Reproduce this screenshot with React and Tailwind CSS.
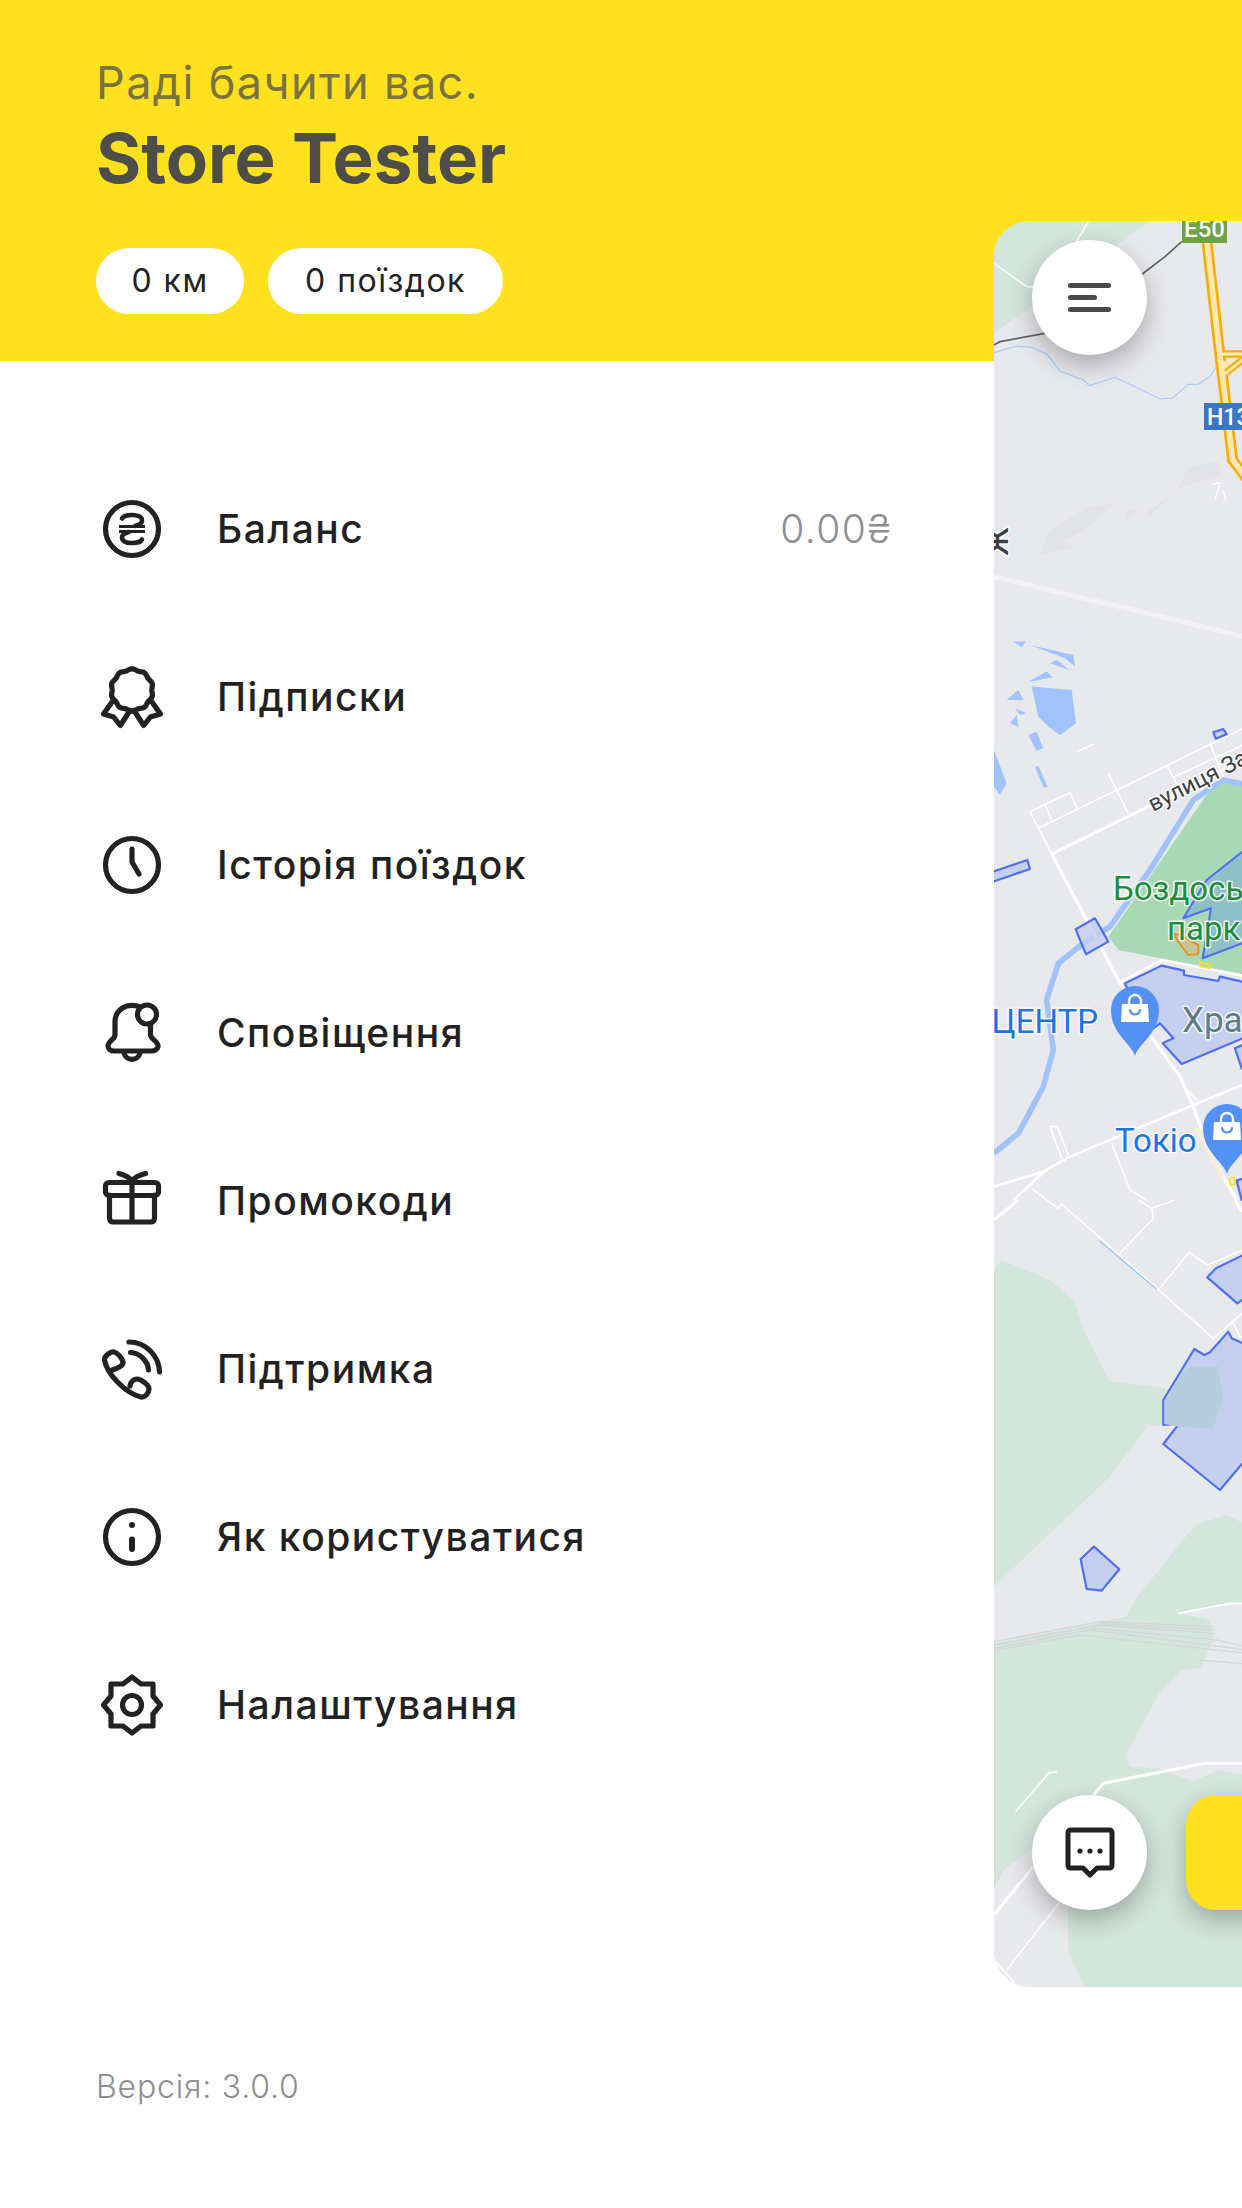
import React from "react";

const menu = [
  { label: "Баланс", icon: "balance", value: "0.00₴" },
  { label: "Підписки", icon: "ribbon" },
  { label: "Історія поїздок", icon: "clock" },
  { label: "Сповіщення", icon: "bell" },
  { label: "Промокоди", icon: "gift" },
  { label: "Підтримка", icon: "phone" },
  { label: "Як користуватися", icon: "info" },
  { label: "Налаштування", icon: "gear" },
];

// wavy outline of the rosette
function rosette() {
  const pts = [];
  for (let i = 0; i < 120; i++) {
    const a = (i / 120) * Math.PI * 2;
    const r = 20.5 + 0.7 * Math.cos(a * 10);
    pts.push(`${(33 + r * Math.sin(a)).toFixed(2)} ${(26 - r * Math.cos(a)).toFixed(2)}`);
  }
  return `M${pts.join("L")}Z`;
}

const icons = {
  balance: (
    <>
      <circle cx="33" cy="33" r="26.5" />
      <path strokeWidth="4.6" d="M23 22.5C25 18 43 17 43 24.5C43 27.5 40 29 36 30M43 43.5C41 48 23 49 23 41.5C23 38.5 26 37 30 36" />
      <path strokeWidth="2.8" strokeLinecap="butt" d="M20 30.5H46M20 35.5H46" />
    </>
  ),
  ribbon: (
    <>
      <path d={rosette()} />
      <path d="M13 38L4.5 50L14.7 53L21.3 61.5L31 46.5M53 38L61.5 50L51.3 53L44.7 61.5L35 46.5" />
    </>
  ),
  clock: (
    <>
      <circle cx="33" cy="33" r="26.5" />
      <path d="M33 17V30L40 42" />
    </>
  ),
  bell: (
    <>
      <circle cx="48" cy="14.5" r="9.5" />
      <path d="M40 6.5C27 2.5 16 10 16 22V35C16 39 9 41 9 46C9 49 12 51 15 51H52C56 51 59 49 59 46C59 41 51.5 39 51.5 35V24" />
      <path d="M25 53C27 61.5 39 61.5 41 53" />
    </>
  ),
  gift: (
    <>
      <rect x="6.5" y="14.5" width="53" height="13" rx="3.5" />
      <path d="M10.5 27V50C10.5 52.5 12 54 14 54H52C54 54 55.5 52.5 55.5 50V27M33 13V54M20 5.5C26 7 30 9 33 13C36 9 40 7 46.5 5.5" />
    </>
  ),
  phone: (
    <>
      <path d="M5.5 24C5 20 12 15 15 16C19 17 23 22 24 26C24.5 29 20 32 13 34M5.5 24C8 38 26 57 42 61C46 61.5 50 57 50 53C50 49 42 43 38 43C34 43 31 47 31 50" />
      <path d="M31.5 16.5C41 17 49 25 49.5 34M30 6C47 6 60 20 60.5 36" />
    </>
  ),
  info: (
    <>
      <circle cx="33" cy="33" r="26.5" />
      <path strokeWidth="6" d="M33 35.5V45" />
      <circle cx="33" cy="21" r="3" fill="#222222" stroke="none" />
    </>
  ),
  gear: (
    <>
      <path d="M33 5L24 12H12V24L4.5 33L12 42V54H24L33 61L42 54H54V42L61.5 33L54 24V12H42Z" />
      <circle cx="33" cy="33" r="9.5" />
    </>
  ),
};

function MenuIcon({ name }) {
  return (
    <svg width="66" height="66" viewBox="0 0 66 66" fill="none" stroke="#222222" strokeWidth="5.2" strokeLinecap="round" strokeLinejoin="round" className="shrink-0">
      {icons[name]}
    </svg>
  );
}

function Pin({ x, y }) {
  return (
    <g transform={`translate(${x} ${y})`}>
      <path fill="#5491f5" d="M0 46C-3 34 -24 24 -24 0A24 24 0 0 1 24 0C24 24 3 34 0 46Z" />
      <path fill="#fff" d="M-13 -6H13L14 12H-14Z" />
      <path fill="none" stroke="#fff" strokeWidth="2.4" d="M-6 -6V-9A6 6 0 0 1 6 -9V-6" />
      <path fill="none" stroke="#5491f5" strokeWidth="2.2" strokeLinecap="round" d="M-5 0C-4 6 4 6 5 0" />
    </g>
  );
}

function MapDrawing() {
  const white = { fill: "none", stroke: "#ffffff", strokeLinejoin: "round" };
  const zone = { fill: "#c5cff0", stroke: "#4d6ef5", strokeWidth: 6.5, strokeLinejoin: "round" };
  const water = "#a0c3fb";
  const halo = { paintOrder: "stroke", stroke: "#ffffff", strokeOpacity: 0.85, strokeWidth: 3, strokeLinejoin: "round" };
  return (
    <svg width="248" height="1766" viewBox="994 221 248 1766" className="block">
      <rect x="994" y="221" width="248" height="1766" fill="#e8e9ed" />

      {/* top part */}
      <g transform="translate(980 200) scale(0.3333)">
        <polygon fill="#d3e6dc" points="42,63 510,63 42,400" />
        <path {...white} strokeWidth="5" d="M325 63L290 125M42 190L140 260L170 262" />
        <path fill="none" stroke="#5f6368" strokeWidth="5" d="M42 435L60 425L195 400M487 222L555 170L605 125" />
        <path fill="none" stroke="#a6c8f8" strokeWidth="3.5" d="M42 458L110 438L155 442L200 462L240 513L310 540L328 557L405 532L540 597L578 594L625 553L655 553L690 530L712 495" />
        <path fill="none" stroke="#ffab00" strokeWidth="33" strokeLinejoin="round" d="M678 100L718 450L758 780L800 835" />
        <path fill="none" stroke="#ffab00" strokeWidth="22" d="M722 462L800 462M730 525L800 470" />
        <path fill="#ffe9b3" stroke="none" d="M726 482L758 486L732 510Z" />
        <path fill="none" stroke="#ffe9b3" strokeWidth="17" strokeLinejoin="round" d="M678 100L718 450L758 780L800 835" />
        <path fill="none" stroke="#ffe9b3" strokeWidth="9" d="M722 462L800 462M730 525L800 470" />
        <g fill="#e2e3e7">
          <polygon points="180,1062 205,995 325,920 405,910 310,995 250,1020 285,1045" />
          <polygon points="430,935 475,925 440,962" />
          <polygon points="495,940 595,870 625,800 715,785 722,822 600,865 510,948" />
        </g>
        <path {...white} strokeWidth="4" d="M695 855L720 848L706 897M730 870L738 905" />
        <path fill="none" stroke="#f1f2f4" strokeWidth="15" d="M42 1130L800 1312" />
        <g fill={water}>
          <polygon points="100,1325 138,1325 125,1342" />
          <polygon points="150,1335 280,1365 285,1400 255,1375" />
          <polygon points="210,1390 230,1380 270,1412" />
          <polygon points="142,1447 200,1415 218,1432" />
          <polygon points="80,1500 115,1470 130,1500" />
          <polygon points="155,1460 275,1470 288,1570 240,1605 205,1580 175,1550" />
        </g>
      </g>

      {/* middle part */}
      <g transform="translate(980 700) scale(0.3333)">
        <g fill={water}>
          <polygon points="90,70 110,45 115,80" />
          <polygon points="105,25 140,40 120,45" />
          <polygon points="145,105 170,95 190,145 170,153" />
          <polygon points="165,200 175,197 203,260 190,262" />
          <polygon points="42,150 80,250 60,285 42,260" />
        </g>
        <path {...white} strokeWidth="5" d="M290 155L342 132" />
        <polygon fill="#a8d8b4" points="385,710 690,270 735,245 800,262 800,825 415,750" />
        <path fill="none" stroke={water} strokeWidth="17" strokeLinejoin="round" d="M42 1360L115 1300L190 1160L220 1050L200 900L235 790L310 730L390 680L510 510L640 300L730 240L800 255" />
        <path {...white} strokeWidth="5" d="M150 335L270 278L292 325M150 335L215 462M195 315L215 360M385 220L445 340M175 385L800 80M560 195L590 250M690 130L730 230M580 232L800 130" />
        <path {...white} strokeWidth="9" d="M215 462L800 175" />
        <path {...white} strokeWidth="10" d="M215 462L420 850L510 1005L600 1130L640 1220L690 1360L770 1500" />
        <path {...white} strokeWidth="8" d="M42 1460L190 1415L270 1370L640 1215L800 1150M100 1500L205 1405M420 848L545 780L800 830" />
        <path {...white} strokeWidth="5" d="M210 1280H232L265 1365M210 1280L245 1375M395 1330L450 1470L500 1500M155 1465L200 1500M620 1170L650 1200" />
        <polygon fill="#f6f0d9" points="642,1285 665,1285 735,1440 720,1435" />
        <polygon fill="#8fc0c6" stroke="#4d6ef5" strokeWidth="6" strokeLinejoin="round" points="680,540 800,445 800,725 668,775 693,625 610,655" />
        <polygon fill="#c9c398" stroke="#f08a00" strokeWidth="5" strokeLinejoin="round" points="580,700 595,725 625,765 655,762 655,735 610,710" />
        <polygon fill="none" stroke="#ffe120" strokeWidth="5" points="660,787 692,795 690,805 660,800" />
        <polygon {...zone} points="435,850 545,797 612,812 612,825 715,843 720,830 800,848 800,1010 605,1092 548,1030 580,1015 540,970 500,1000" />
        <polygon {...zone} fillOpacity="0.85" points="287,688 345,655 385,725 318,763" />
        <polygon {...zone} points="30,518 142,480 150,507 30,548" />
        <polygon {...zone} points="700,97 730,87 740,103 707,116" />
        <polygon {...zone} points="765,1045 800,1030 800,1120 785,1105" />
        <polygon {...zone} points="770,1442 800,1432 800,1510 785,1500" />
        <polygon fill="none" stroke="#ffe120" strokeWidth="5" points="748,1437 762,1433 765,1452 752,1456" />
      </g>

      {/* lower part */}
      <g transform="translate(980 1200) scale(0.3333)">
        <polygon fill="#d3e6dc" points="42,205 65,180 210,240 285,305 315,400 388,543 570,567 550,675 505,677 390,830 42,1160" />
        <path {...white} strokeWidth="9" d="M42 60L115 0" />
        <path {...white} strokeWidth="5" d="M200 0L235 25L245 12L700 415L800 330M475 0L515 25L520 55L415 165M515 25L585 0M535 270L628 157L682 195L800 145M755 360L780 410L800 412" />
        <path {...white} strokeWidth="9" d="M765 0L786 35" />
        <path fill="none" stroke="#9fc4f8" strokeWidth="4" d="M358 122L530 268" />
        <polygon {...zone} points="682,232 708,205 800,160 800,290 772,310" />
        <polygon {...zone} points="643,447 673,465 690,457 745,395 755,415 800,435 800,775 720,870 550,732 598,670 550,675 550,600" />
        <polygon fill="#b6cde0" points="620,503 712,497 730,592 700,688 600,680 553,672 553,602" />
        <polygon {...zone} points="302,1077 342,1040 418,1108 365,1172 320,1167" />
      </g>

      {/* bottom part */}
      <g transform="translate(980 1600) scale(0.3333)">
        <polygon fill="#d3e6dc" points="42,130 440,50 465,0 645,-225 740,-255 800,-225 800,1170 320,1170 265,1060 265,920 155,750 70,810 42,870" />
        <polygon fill="#e8e9ed" points="595,40 750,10 800,10 800,525 715,510 640,543 530,505 450,500 435,470 535,285 605,210 660,205 700,120 690,60" />
        <path fill="none" stroke="#d2d5d9" strokeWidth="4" d="M42 125L360 65L700 80M42 135L360 75L705 100M42 145L350 85L710 120L800 140M42 152L300 105L800 160M360 70L705 90M330 90L800 150M655 180L800 192" />
        <path {...white} strokeWidth="5" d="M595 40L750 10H800M107 635L207 518L232 515M80 1110L240 905M42 1080L105 1150" />
        <path {...white} strokeWidth="9" d="M340 585L370 550L675 490H800M42 945L160 800" />
      </g>

      {/* labels */}
      <text x="1098" y="1033" textAnchor="end" fontSize="33" fill="#1a73e8" fontFamily="Roboto, sans-serif" {...halo}>ЦЕНТР</text>
      <text x="1115" y="1152" fontSize="33" fill="#1a73e8" fontFamily="Roboto, sans-serif" {...halo}>Токіо</text>
      <text x="1182" y="1032" fontSize="35" fill="#5f7c8a" fontFamily="Roboto, sans-serif" {...halo}>Храм</text>
      <text x="1113" y="900" fontSize="33" fill="#1e8e3e" fontFamily="Roboto, sans-serif" {...halo}>Боздоський</text>
      <text x="1167" y="940" fontSize="33" fill="#1e8e3e" fontFamily="Roboto, sans-serif" {...halo}>парк</text>
      <text transform="translate(1153 812) rotate(-27)" fontSize="23" fill="#3c4043" fontFamily="Roboto, sans-serif" {...halo}>вулиця Заводська</text>
      <text transform="translate(1008 556) rotate(-90)" fontSize="38" fill="#3c4043" fontFamily="Roboto, sans-serif" {...halo}>ж</text>

      <Pin x={1135} y={1010} />
      <Pin x={1227} y={1128} />

      {/* road shields */}
      <rect x="1182" y="216" width="45" height="27" fill="#6ea243" />
      <text x="1204.5" y="237" textAnchor="middle" fontSize="24" fontWeight="500" fill="#ffffff" fontFamily="Roboto, sans-serif">E50</text>
      <rect x="1204" y="403" width="45" height="27" fill="#3a77c9" />
      <text x="1207" y="425" fontSize="23" fontWeight="500" fill="#ffffff" fontFamily="Roboto, sans-serif">H13</text>
    </svg>
  );
}

export default function App() {
  return (
    <div className="relative flex h-[2208px] w-[1242px] flex-col overflow-hidden bg-white font-['Inter','Noto_Sans',sans-serif]">
      {/* Header */}
      <header className="h-[361px] shrink-0 bg-[#ffe120] pl-[96px] pt-[56px]">
        <p className="text-[45px] leading-[54px] tracking-[1.4px] text-[#7a7340]">Раді бачити вас.</p>
        <h1 className="mt-[9px] text-[69px] font-bold leading-[78px] text-[#4d4d4a]">Store Tester</h1>
        <div className="mt-[51px] flex gap-[24px]">
          <span className="flex h-[66px] w-[148px] items-center justify-center rounded-[33px] bg-white text-[32px] tracking-[1.5px] text-[#222222]">0 км</span>
          <span className="flex h-[66px] w-[235px] items-center justify-center rounded-[33px] bg-white text-[32px] tracking-[1.5px] text-[#222222]">0 поїздок</span>
        </div>
      </header>

      {/* Menu */}
      <nav className="flex flex-col pt-[84px]">
        {menu.map((item) => (
          <div key={item.label} className="flex h-[168px] items-center gap-[52px] pl-[99px] pr-[350px]">
            <MenuIcon name={item.icon} />
            <span className="text-[39px] font-[450] tracking-[1.5px] text-[#222222]">{item.label}</span>
            {item.value && <span className="ml-auto text-[39px] font-light tracking-[1.5px] text-[#8f8f8f]">{item.value}</span>}
          </div>
        ))}
      </nav>

      <p className="absolute bottom-[103px] left-[96px] text-[32px] font-light leading-[36px] tracking-[0.8px] text-[#8f8f8f]">Версія: 3.0.0</p>

      {/* Map panel sliding over the page */}
      <div className="absolute left-[994px] top-[221px] h-[1766px] w-[248px] overflow-hidden rounded-l-[36px] bg-[#e8e9ed]">
        <MapDrawing />
        <button className="absolute left-[38px] top-[19px] flex h-[115px] w-[115px] flex-col justify-center gap-[7px] rounded-full bg-white pl-[36px] shadow-[0_10px_26px_rgba(0,0,0,0.28)]">
          <span className="h-[5px] w-[43px] rounded-full bg-[#4a4a4a]" />
          <span className="h-[5px] w-[29px] rounded-full bg-[#4a4a4a]" />
          <span className="h-[5px] w-[43px] rounded-full bg-[#4a4a4a]" />
        </button>
        <button className="absolute bottom-[77px] left-[38px] flex h-[115px] w-[115px] items-center justify-center rounded-full bg-white shadow-[0_10px_26px_rgba(0,0,0,0.28)]">
          <svg width="50" height="52" viewBox="0 0 50 52" fill="none">
            <path stroke="#222222" strokeWidth="5" strokeLinejoin="round" d="M6 3H44C46 3 47 4 47 6V38C47 40 46 41 44 41H32L25 48L18 41H6C4 41 3 40 3 38V6C3 4 4 3 6 3Z" />
            <circle cx="15" cy="24" r="2.6" fill="#222222" />
            <circle cx="25" cy="24" r="2.6" fill="#222222" />
            <circle cx="35" cy="24" r="2.6" fill="#222222" />
          </svg>
        </button>
        <div className="absolute bottom-[77px] left-[192px] h-[115px] w-[90px] rounded-[30px] bg-[#ffe120] shadow-[0_10px_26px_rgba(0,0,0,0.28)]" />
      </div>
    </div>
  );
}
